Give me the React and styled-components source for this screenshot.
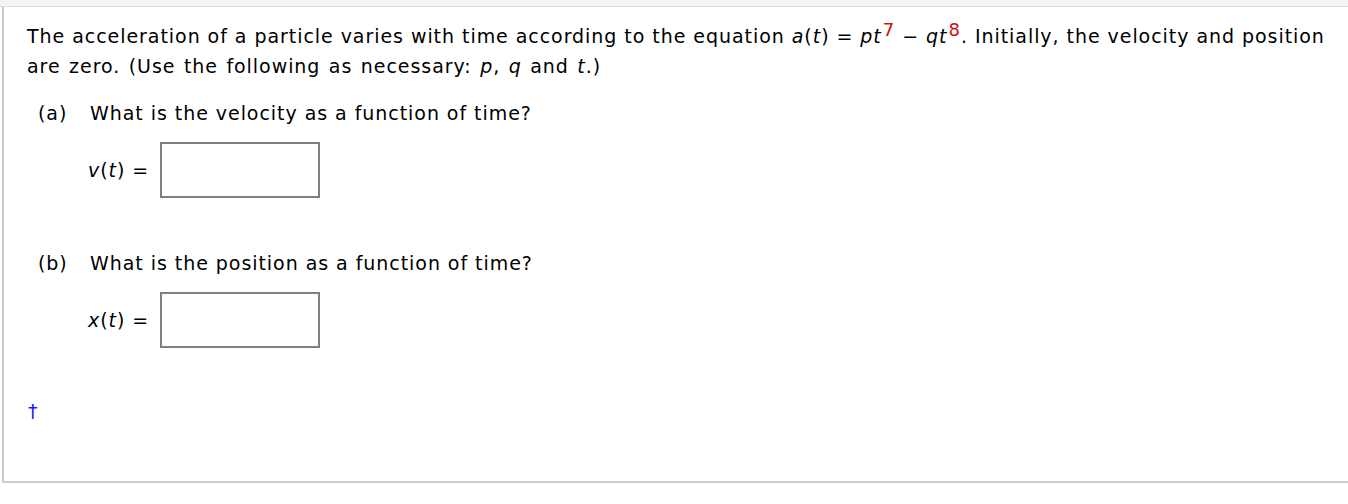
import React from 'react';
import styled, { createGlobalStyle } from 'styled-components';

const GlobalStyle = createGlobalStyle`
  body {
    margin: 0;
    background: #ffffff;
    font-family: 'DejaVu Sans', Verdana, sans-serif;
    color: #000;
  }
`;

const TopStrip = styled.div`
  height: 6px;
  background: #f4f4f4;
  border-bottom: 1px solid #dedede;
`;

const Panel = styled.div`
  margin-left: 2px;
  border-left: 2px solid #cccccc;
  border-bottom: 2px solid #cccccc;
  height: 476px;
  box-sizing: border-box;
  padding: 14px 0 0 23px;
  letter-spacing: 0.95px;
`;

const Intro = styled.p`
  margin: 0;
  font-size: 19px;
  line-height: 30px;
`;

const Tail = styled.span`
  word-spacing: 1.5px;
`;

const V = styled.i`
  font-style: italic;
`;

const Sup = styled.sup`
  color: #cc1111;
  font-size: 0.95em;
  line-height: 0;
  vertical-align: 0.4em;
  margin-left: 1px;
`;

const Part = styled.div`
  margin-top: ${(p) => p.$top}px;
  padding-left: 11px;
`;

const Question = styled.div`
  display: flex;
  font-size: 19px;
  line-height: 30px;
`;

const Letter = styled.span`
  width: 52px;
`;

const AnswerRow = styled.div`
  display: flex;
  align-items: center;
  margin-top: ${(p) => p.$top}px;
  padding-left: 50px;
  font-size: 19px;
`;

const Label = styled.span`
  width: 72px;
`;

const Box = styled.input`
  width: 160px;
  height: 56px;
  box-sizing: border-box;
  border: 2px solid #808080;
  background: #fff;
  margin: 0;
  padding: 0 8px;
  font-size: 19px;
`;

const Dagger = styled.div`
  margin-top: 48px;
  padding-left: 1px;
  color: #1a1aff;
  font-size: 19px;
  line-height: 30px;
`;

const App = () => (
  <>
    <GlobalStyle />
    <TopStrip />
    <Panel>
      <Intro>
        The acceleration of a particle varies with time according to the equation{' '}
        <V>a</V>(<V>t</V>) = <V>p</V><V>t</V><Sup>7</Sup> − <V>q</V><V>t</V><Sup>8</Sup>. Initially,
        the velocity and position{' '}
        <Tail>
          are zero. (Use the following as necessary: <V>p</V>, <V>q</V> and <V>t</V>.)
        </Tail>
      </Intro>

      <Part $top={17}>
        <Question>
          <Letter>(a)</Letter>
          <span>What is the velocity as a function of time?</span>
        </Question>
        <AnswerRow $top={14}>
          <Label>
            <V>v</V>(<V>t</V>) =
          </Label>
          <Box type="text" />
        </AnswerRow>
      </Part>

      <Part $top={50}>
        <Question>
          <Letter>(b)</Letter>
          <span>What is the position as a function of time?</span>
        </Question>
        <AnswerRow $top={14}>
          <Label>
            <V>x</V>(<V>t</V>) =
          </Label>
          <Box type="text" />
        </AnswerRow>
      </Part>

      <Dagger>†</Dagger>
    </Panel>
  </>
);

export default App;
